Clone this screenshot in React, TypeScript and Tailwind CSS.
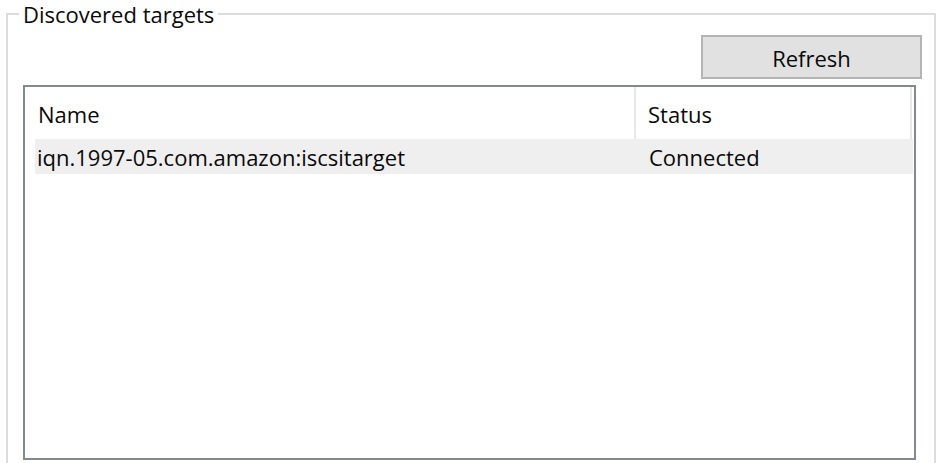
import React from "react";

export default function App() {
  return (
    <div
      className="w-[942px] h-[463px] bg-white overflow-hidden text-[#0a0a0a] relative"
      style={{ fontFamily: '"Open Sans", "Noto Sans", sans-serif' }}
    >
      <fieldset className="ml-[6px] w-[930px] h-[520px] border-2 border-[#dcdcdc] p-0 m-0 min-w-0">
        <legend className="ml-[11px] px-[4px] text-[22px] leading-[28px]">Discovered targets</legend>
        <div className="flex flex-col">
          <div className="flex justify-end mt-[7px] pr-[12px]">
            <button className="w-[221px] h-[44px] border-2 border-[#b4b4b4] bg-[#e1e1e1] text-[22px] leading-none text-[#0a0a0a] flex items-center justify-center pt-[1px]">
              Refresh
            </button>
          </div>
          <div className="ml-[15px] mt-[6px] w-[893px] h-[375px] border-2 border-[#848890] bg-white">
            <div className="ml-[10px] w-[878px] flex flex-col">
              <div className="flex h-[52px] text-[22px] leading-[28px]">
                <div className="w-[601px] flex items-end pb-[11px] pl-[3px] border-r-2 border-[#e8e8e8]">Name</div>
                <div className="w-[276px] flex items-end pb-[11px] pl-[12px] border-r-2 border-[#e8e8e8]">Status</div>
              </div>
              <div className="flex h-[35px] bg-[#efefef] text-[22px] leading-[28px] items-center pt-[1px]">
                <div className="w-[603px] pl-[2px]">iqn.1997-05.com.amazon:iscsitarget</div>
                <div className="w-[275px] pl-[11px]">Connected</div>
              </div>
            </div>
          </div>
        </div>
      </fieldset>
    </div>
  );
}
